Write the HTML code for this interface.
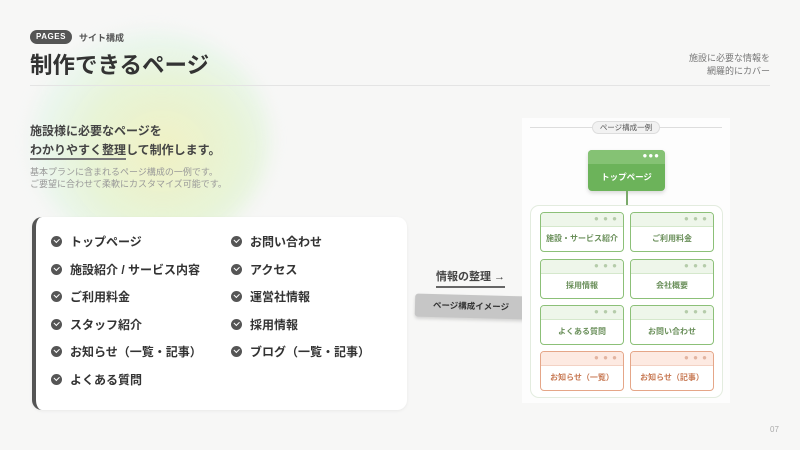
<!DOCTYPE html>
<html><head><meta charset="utf-8"><style>
*{margin:0;padding:0;box-sizing:border-box}
body{width:800px;height:450px;overflow:hidden;background:#f7f7f6;font-family:"Liberation Sans","Noto Sans CJK JP",sans-serif;color:#333;position:relative}
.abs{position:absolute}
.blob{left:30px;top:30px;width:240px;height:220px;border-radius:50%;background:radial-gradient(ellipse at 55% 55%,rgba(240,240,190,.9) 0%,rgba(225,242,200,.7) 40%,rgba(215,245,225,.4) 65%,rgba(247,247,246,0) 80%);filter:blur(8px)}
.badge{left:30px;top:30px;width:42px;height:14px;border-radius:7px;background:#555;color:#fff;font-size:8px;font-weight:bold;text-align:center;line-height:14px;letter-spacing:.5px}
.ck{width:11px;height:11px;border-radius:50%;background:#555;display:inline-block;position:relative;vertical-align:middle;margin-right:8px;top:-1px}
.ck:after{content:"";position:absolute;left:3px;top:2px;width:4px;height:2.5px;border-left:1.5px solid #fff;border-bottom:1.5px solid #fff;transform:rotate(-45deg)}
.item{position:absolute;font-size:12px;font-weight:bold;color:#333;white-space:nowrap}
.bx{position:absolute;width:84px;height:40px;border:1.5px solid #8cc078;border-radius:4px;background:#fff;overflow:hidden;font-size:8px;font-weight:bold;color:#6a8f5a;text-align:center}
.bx .h{height:14px;background:#eef6ea;border-bottom:1px solid #d5e8cc;text-align:right;padding-right:5px;font-size:8px;color:#b5ccaa;line-height:12px;letter-spacing:1px}
.bx .t{line-height:24px}
.bx.r{border-color:#e5a688;color:#c87a55}
.bx.r .h{background:#fdeae2;border-bottom-color:#f3d2c4;color:#e3b4a0}
</style></head><body>
<div class="abs blob"></div>
<div class="abs badge">PAGES</div>
<div class="abs" style="left:79px;top:31px;font-size:9px;font-weight:bold;color:#555">サイト構成</div>
<div class="abs" style="left:30px;top:48px;font-size:22.5px;font-weight:bold;color:#333">制作できるページ</div>
<div class="abs" style="right:30px;top:52px;font-size:9px;color:#777;text-align:right;line-height:13px">施設に必要な情報を<br>網羅的にカバー</div>
<div class="abs" style="left:30px;top:85px;width:740px;height:1px;background:#e4e4e4"></div>
<div class="abs" style="left:30px;top:122px;font-size:12px;font-weight:bold;color:#444;line-height:19px">施設様に必要なページを<br><span style="border-bottom:2px solid #777;padding-bottom:1px">わかりやすく整理</span>して制作します。</div>
<div class="abs" style="left:30px;top:166px;font-size:9px;color:#999;line-height:12px">基本プランに含まれるページ構成の一例です。<br>ご要望に合わせて柔軟にカスタマイズ可能です。</div>
<div class="abs" style="left:32px;top:217px;width:375px;height:193px;background:#fff;border-radius:10px;border-left:4px solid #555;box-shadow:0 1px 3px rgba(0,0,0,.06)"></div>
<div class="item" style="left:51px;top:233px"><span class="ck"></span>トップページ</div>
<div class="item" style="left:51px;top:261px"><span class="ck"></span>施設紹介 / サービス内容</div>
<div class="item" style="left:51px;top:288px"><span class="ck"></span>ご利用料金</div>
<div class="item" style="left:51px;top:316px"><span class="ck"></span>スタッフ紹介</div>
<div class="item" style="left:51px;top:343px"><span class="ck"></span>お知らせ（一覧・記事）</div>
<div class="item" style="left:51px;top:371px"><span class="ck"></span>よくある質問</div>
<div class="item" style="left:231px;top:233px"><span class="ck"></span>お問い合わせ</div>
<div class="item" style="left:231px;top:261px"><span class="ck"></span>アクセス</div>
<div class="item" style="left:231px;top:288px"><span class="ck"></span>運営社情報</div>
<div class="item" style="left:231px;top:316px"><span class="ck"></span>採用情報</div>
<div class="item" style="left:231px;top:343px"><span class="ck"></span>ブログ（一覧・記事）</div>
<div class="abs" style="left:436px;top:268px;font-size:11px;font-weight:bold;color:#444;border-bottom:2px solid #666;padding-bottom:2px">情報の整理 →</div>
<div class="abs" style="left:415px;top:295px;width:112px;height:23px;background:#c6c6c6;border-radius:3px;transform:rotate(1.5deg);font-size:8.5px;font-weight:bold;color:#333;text-align:center;line-height:23px;box-shadow:0 2px 3px rgba(0,0,0,.15)">ページ構成イメージ</div>
<div class="abs" style="left:522px;top:118px;width:208px;height:285px;background:#fdfdfd"></div>
<div class="abs" style="left:530px;top:127px;width:192px;height:1px;background:#ddd"></div>
<div class="abs" style="left:592px;top:121px;width:68px;height:13px;border-radius:7px;background:#f2f2f2;border:1px solid #ddd;font-size:7.5px;color:#555;text-align:center;line-height:11px">ページ構成一例</div>
<div class="abs" style="left:588px;top:150px;width:77px;height:41px;background:#6cb35a;border-radius:4px;box-shadow:0 2px 4px rgba(0,0,0,.15);color:#fff;font-size:8.5px;font-weight:bold;text-align:center">
<div style="height:14px;background:#85c274;text-align:right;padding-right:5px;font-size:8px;line-height:12px;letter-spacing:1px;border-radius:4px 4px 0 0">●●●</div><div style="line-height:26px">トップページ</div></div>
<div class="abs" style="left:626px;top:191px;width:1.5px;height:14px;background:#7aaa6a"></div>
<div class="abs" style="left:530px;top:205px;width:193px;height:193px;border:1px solid #e3ecdf;border-radius:9px;background:#fff"></div>
<div class="bx" style="left:540px;top:212px"><div class="h">● ● ●</div><div class="t">施設・サービス紹介</div></div>
<div class="bx" style="left:630px;top:212px"><div class="h">● ● ●</div><div class="t">ご利用料金</div></div>
<div class="bx" style="left:540px;top:259px"><div class="h">● ● ●</div><div class="t">採用情報</div></div>
<div class="bx" style="left:630px;top:259px"><div class="h">● ● ●</div><div class="t">会社概要</div></div>
<div class="bx" style="left:540px;top:305px"><div class="h">● ● ●</div><div class="t">よくある質問</div></div>
<div class="bx" style="left:630px;top:305px"><div class="h">● ● ●</div><div class="t">お問い合わせ</div></div>
<div class="bx r" style="left:540px;top:351px"><div class="h">● ● ●</div><div class="t">お知らせ（一覧）</div></div>
<div class="bx r" style="left:630px;top:351px"><div class="h">● ● ●</div><div class="t">お知らせ（記事）</div></div>
<div class="abs" style="left:770px;top:425px;font-size:8px;color:#aaa">07</div>
</body></html>
